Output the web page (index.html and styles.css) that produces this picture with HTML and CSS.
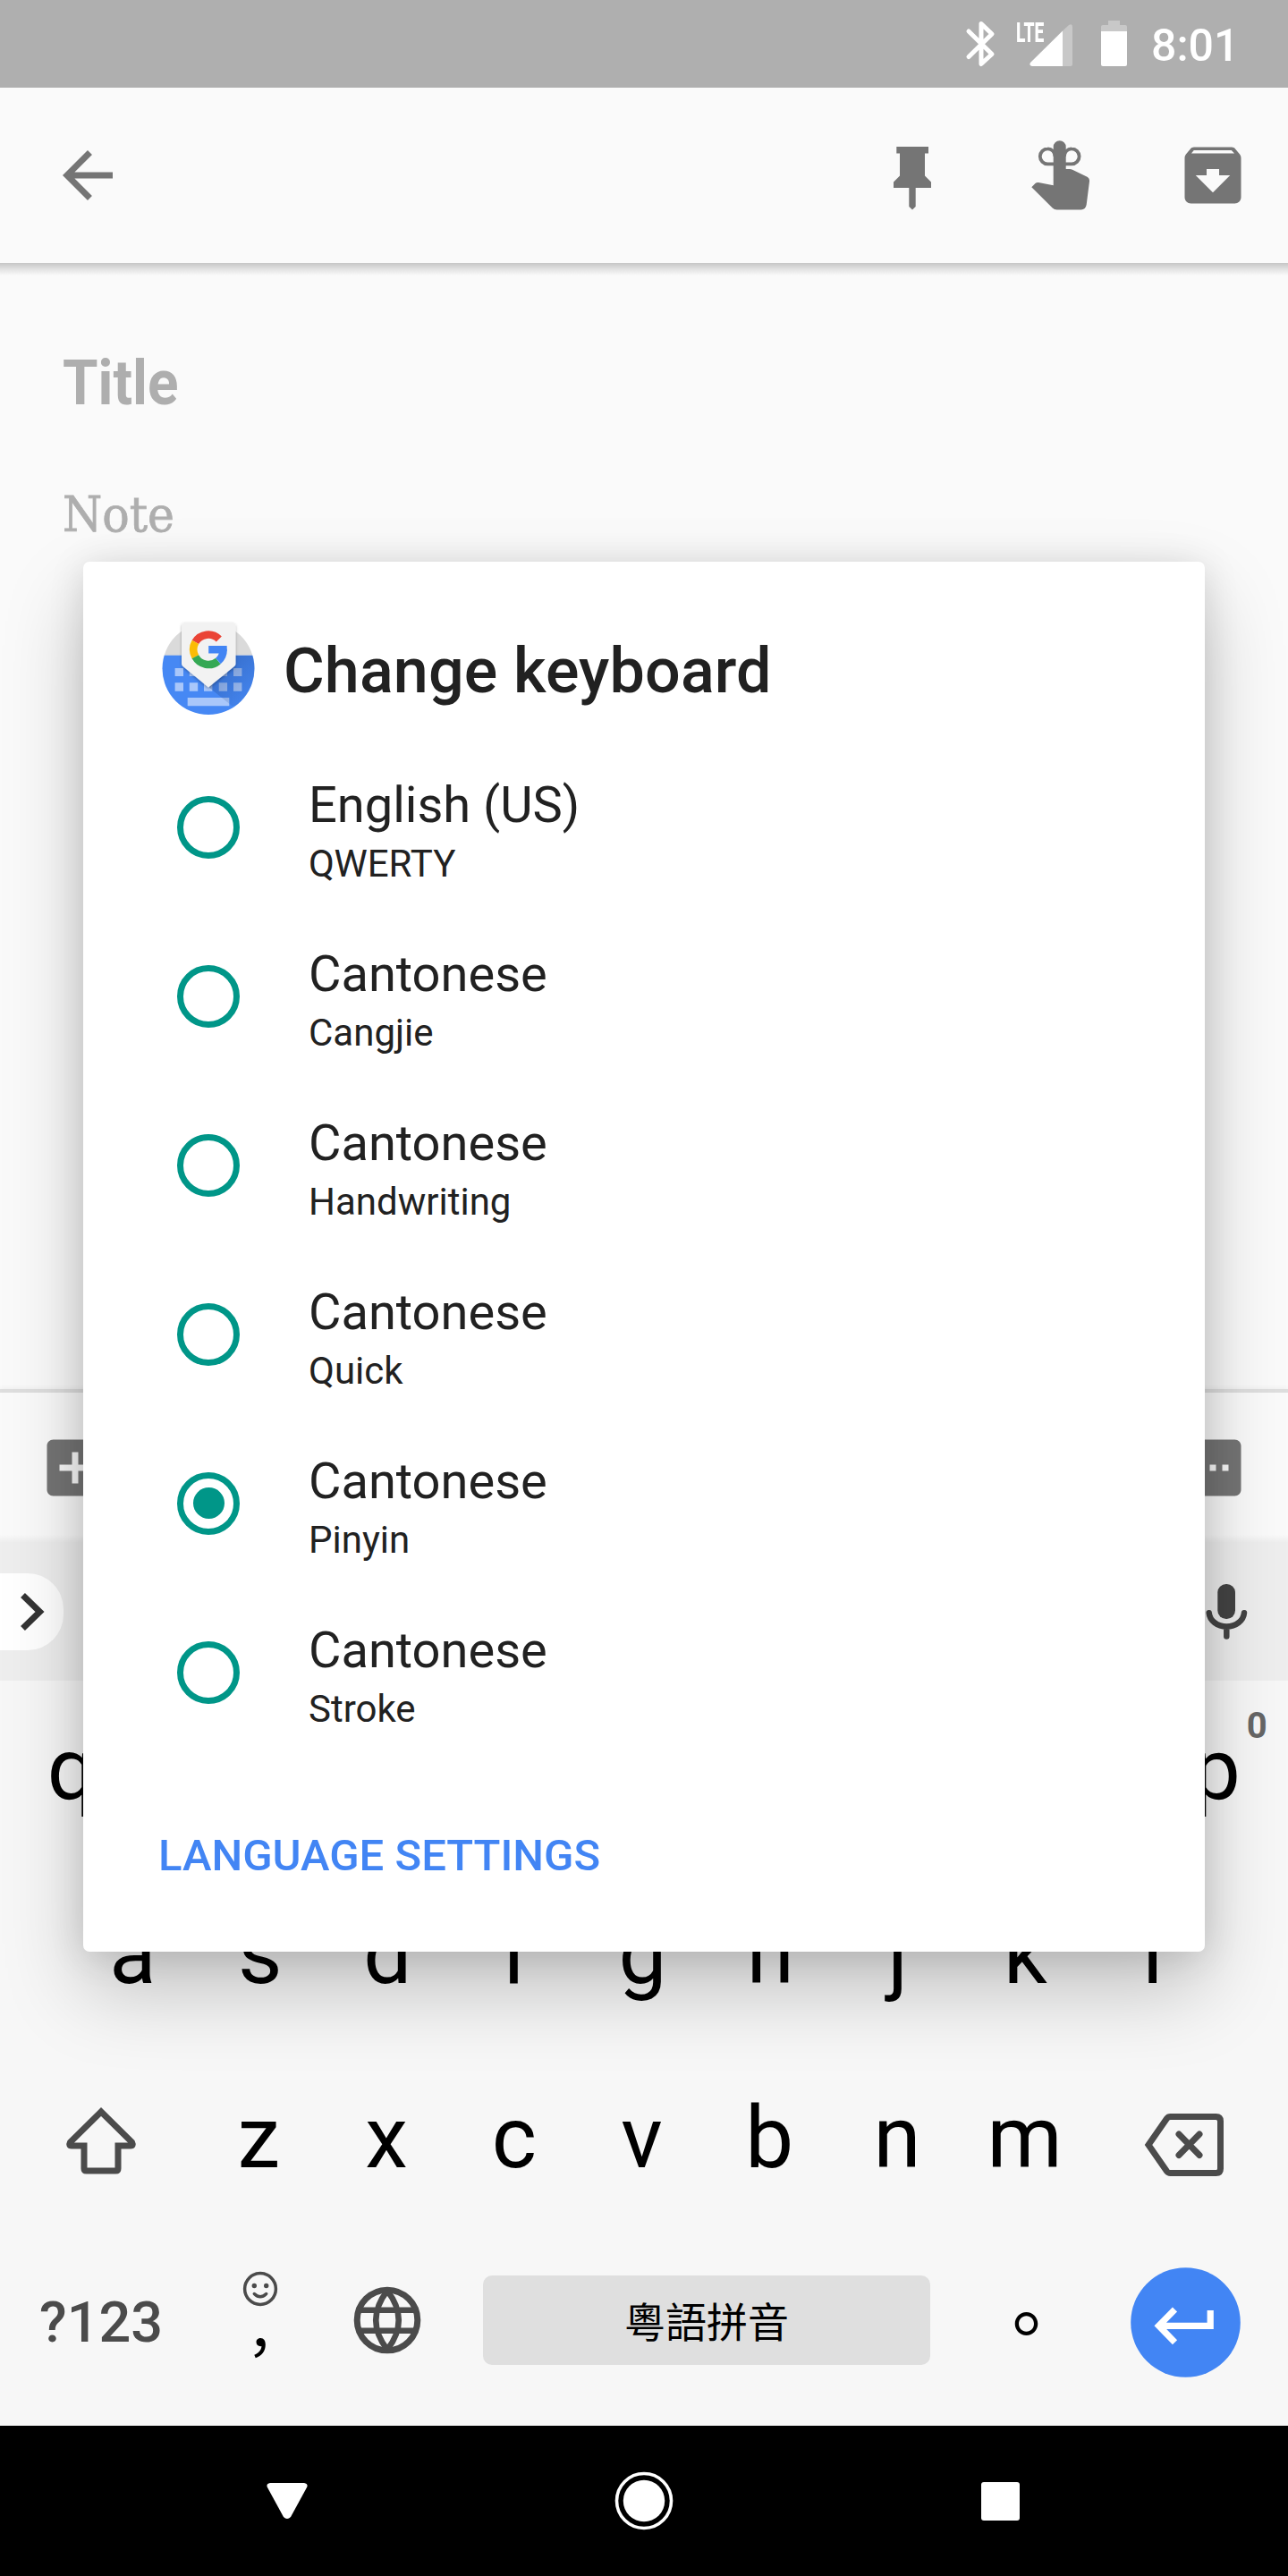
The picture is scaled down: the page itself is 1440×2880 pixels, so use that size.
FILE: index.html
```
<!DOCTYPE html>
<html lang="en">
<head>
<meta charset="utf-8">
<title>Change keyboard</title>
<link rel="stylesheet" href="styles.css">
</head>
<body>
<div class="screen">
  <header class="status-bar">
    <svg class="status-bluetooth" width="36" height="54" viewBox="1078 22 36 54"><path d="M1083 35l26 25.500-12 11V26.500l12 11.500-26 25.500" fill="none" stroke="#fff" stroke-width="5" stroke-linecap="round" stroke-linejoin="round"/></svg>
    <div class="signal">
      <svg width="50" height="50" viewBox="1150 26 50 50"><path d="M1188 34.500l7-6.500q4-2 4 2v42q0 2-2 2h-9z" fill="#c8c8c8"/><path d="M1188 34.500V74h-34q-4-1-2-4z" fill="#fff"/></svg>
      <span class="lte">LTE</span>
    </div>
    <svg class="status-battery" width="29" height="52" viewBox="1231 23 29 52"><path d="M1239 23h13v5h6q2 0 2 2v6h-29v-6q0-2 2-2h6z" fill="#c8c8c8"/><path d="M1231 35h29v37q0 2-2 2h-25q-2 0-2-2z" fill="#fff"/></svg>
    <span class="clock">8:01</span>
  </header>

  <nav class="toolbar">
    <svg class="back" width="84" height="84" viewBox="0 0 24 24"><path d="M20 11H7.830l5.590-5.590L12 4l-8 8 8 8 1.410-1.410L7.830 13H20z" fill="#757575"/></svg>
    <svg width="84" height="84" viewBox="978 154 84 84"><path d="M1002.300 164H1038v7.500h-4v25l7 7V210h-17.300v21l-3.700 3.500-3.700-3.500v-21H999v-6.500l7-7v-25h-3.700z" fill="#757575"/></svg>
    <svg width="84" height="84" viewBox="1146 154 84 84"><g fill="none" stroke="#757575" stroke-width="3.800"><path d="M1180 183.300h-8.700a8.500 8.500 0 0 1 0-17a8 8.700 0 0 1 8.200 8.700"/><path d="M1189.400 183.300h8.700a8.500 8.500 0 0 0 0-17a8 8.700 0 0 0-8.200 8.700"/></g><path d="M1177.700 164.300a7 7 0 0 1 14 0V189h4.300q1.500 0 3 .7l16.500 8q2.800 1.600 2.500 5l-3.300 26q-1 5.600-6 5.700h-27q-3 0-5-2l-23.400-23.200 4.200-4.200q1.500-1.300 3.500-1l16.700 3.300z" fill="#757575"/></svg>
    <svg width="84" height="84" viewBox="0 0 24 24"><path fill="#757575" d="M20.540 5.230l-1.390-1.680C18.880 3.210 18.470 3 18 3H6c-.47 0-.88.21-1.160.55L3.460 5.230C3.170 5.570 3 6.020 3 6.500V19c0 1.100.9 2 2 2h14c1.100 0 2-.9 2-2V6.500c0-.48-.17-.93-.46-1.270zM12 17.500L6.500 12H10v-2h4v2h3.500L12 17.500zM5.120 5l.81-1h12l.94 1H5.120z"/></svg>
  </nav>

  <main class="note">
    <div class="note-title"><span>Title</span></div>
    <div class="note-body"><span>Note</span></div>
  </main>

  <footer class="note-bar">
    <svg width="84" height="84" viewBox="0 0 24 24"><path fill="#757575" d="M19 3H5c-1.110 0-2 .9-2 2v14c0 1.100.89 2 2 2h14c1.100 0 2-.9 2-2V5c0-1.100-.9-2-2-2zm-2 10h-4v4h-2v-4H7v-2h4V7h2v4h4v2z"/></svg>
    <svg width="84" height="84" viewBox="0 0 24 24"><path fill="#757575" d="M19 3H5c-1.110 0-2 .9-2 2v14c0 1.100.89 2 2 2h14c1.100 0 2-.9 2-2V5c0-1.100-.9-2-2-2zM9 13H7v-2h2zm4 0h-2v-2h2zm4 0h-2v-2h2z"/></svg>
  </footer>

  <section class="keyboard">
    <div class="strip">
      <div class="expand"><svg width="32" height="48" viewBox="20 1777.500 32 48"><path d="M25.500 1783l19 18.500-19 18.500" fill="none" stroke="#333" stroke-width="7"/></svg></div>
      <svg width="52" height="68" viewBox="1345 1767 52 68"><rect x="1361.300" y="1770" width="19.700" height="39" rx="9.500" fill="#444"/><path d="M1351.700 1802.200a19.700 16.500 0 0 0 39.300 0M1371.300 1819v9.500" fill="none" stroke="#444" stroke-width="6.500" stroke-linecap="round"/></svg>
    </div>
    <div class="row">
      <span class="key">q</span><span class="key">w</span><span class="key">e</span><span class="key">r</span><span class="key">t</span><span class="key">y</span><span class="key">u</span><span class="key">i</span><span class="key">o</span><span class="key">p<small class="hint">0</small></span>
    </div>
    <div class="row row-home">
      <span class="key">a</span><span class="key">s</span><span class="key">d</span><span class="key">f</span><span class="key">g</span><span class="key">h</span><span class="key">j</span><span class="key">k</span><span class="key">l</span>
    </div>
    <div class="row row-shift">
      <svg width="209" height="206" viewBox="9 2291 209 206"><path d="M113 2361L78.500 2395q-2 4 1.500 4h14v25.500q0 2.500 2.500 2.500h33q2.500 0 2.500-2.500V2399h14q3.500 0 1.500-4z" fill="none" stroke="#4b4b4b" stroke-width="7"/></svg>
      <span class="key">z</span><span class="key">x</span><span class="key">c</span><span class="key">v</span><span class="key">b</span><span class="key">n</span><span class="key">m</span>
      <svg width="214" height="206" viewBox="1217 2291 214 206"><g fill="none" stroke="#4b4b4b" stroke-width="7"><path d="M1284 2398l20.500-29.500q1.500-2 4-2h51q5 0 5 5v53q0 5-5 5h-51q-2.500 0-4-2z"/><path d="M1318 2386l23 23.500m0-23.500l-23 23.500" stroke-linecap="round"/></g></svg>
    </div>
    <div class="row row-bottom">
      <span class="symbols">?123</span>
      <div class="comma-key">
        <svg width="42" height="42" viewBox="270 2538 42 42"><circle cx="291" cy="2559" r="17.400" fill="none" stroke="#4b4b4b" stroke-width="3.500"/><circle cx="284.300" cy="2555.500" r="2.700" fill="#4b4b4b"/><circle cx="297.700" cy="2555.500" r="2.700" fill="#4b4b4b"/><path d="M284.300 2564.500q6.700 6.500 13.400 0" fill="none" stroke="#4b4b4b" stroke-width="3.500" stroke-linecap="round"/></svg>
        <span class="comma" lang="zh-Hant">，</span>
      </div>
      <svg width="142" height="206" viewBox="362 2497 142 206"><g fill="none" stroke="#4b4b4b"><circle cx="433" cy="2594" r="33.800" stroke-width="7"/><path d="M433 2561q-25.500 33 0 66M433 2561q25.500 33 0 66M401 2582.700h64M401 2605.700h64" stroke-width="6.500"/></g></svg>
      <span class="space" lang="zh-Hant">粵語拼音</span>
      <span class="period" lang="zh-Hant">。</span>
      <svg width="142" height="206" viewBox="1254.500 2497 142 206"><circle cx="1325" cy="2596.500" r="61.300" fill="#4285f4"/><path d="M1352.700 2583v17.300H1295.500M1313 2582l-18 18.300 18 18.500" fill="none" stroke="#fff" stroke-width="7.200"/></svg>
    </div>
  </section>

  <nav class="system-nav">
    <svg width="50" height="46" viewBox="296 2773 50 46"><path d="M302 2776h38q5 1 3 5l-18 33q-4 4-8 0l-18-33q-2-4 3-5z" fill="#fff"/></svg>
    <svg class="home" width="66" height="66" viewBox="-33 -33 66 66"><circle r="30.500" fill="none" stroke="#fff" stroke-width="3.600"/><circle r="23.200" fill="#fff"/></svg>
    <span class="recents"></span>
  </nav>

  <div class="dialog">
    <div class="dialog-head">
      <svg width="108" height="108" viewBox="179 694 108 108">
        <defs>
          <clipPath id="disc"><circle cx="233" cy="747.500" r="51.500"/></clipPath>
          <linearGradient id="fold" x1="0" y1="0" x2="1" y2="1"><stop offset="0" stop-color="#1a3f80" stop-opacity=".45"/><stop offset="1" stop-color="#1a3f80" stop-opacity="0"/></linearGradient>
          <filter id="tag-shadow" x="-20%" y="-20%" width="140%" height="140%"><feDropShadow dx="0" dy="1.500" stdDeviation="1.500" flood-opacity=".3"/></filter>
        </defs>
        <g clip-path="url(#disc)">
          <rect x="181" y="695" width="104" height="38" fill="#dadada"/>
          <rect x="181" y="732.700" width="104" height="67" fill="#4688f4"/>
          <g fill="#a9c7fa"><path d="M195.600 747h9.400v9h-9.400zM211.800 747h9.400v9h-9.400zM244.700 747h9.400v9h-9.400zM261 747h9.400v9H261zM195.600 763.300h9.400v9.400h-9.400zM211.800 763.300h9.400v9.400h-9.400zM228 763.300h9.400v9.400H228zM244.700 763.300h9.400v9.400h-9.400zM261 763.300h9.400v9.400H261zM209.700 780h46.600v9.300h-46.600z"/></g>
          <path d="M263.500 733H285v56l-26 0-26-21 30.500-24z" fill="url(#fold)"/>
        </g>
        <path d="M207 696h52.500q4 0 4 4v42q0 2-1.500 3l-29 23.500-28.500-23.500q-1.500-1-1.500-3v-42q0-4 4-4z" fill="#f2f2f2" filter="url(#tag-shadow)"/>
        <g fill="none" stroke-width="8.600">
          <path d="M244.800 714.500A16.800 16.800 0 0 0 218.400 717.900" stroke="#ea4335"/>
          <path d="M218.400 717.900A16.800 16.800 0 0 0 218.400 734.300" stroke="#fbbc05"/>
          <path d="M218.400 734.300A16.800 16.800 0 0 0 243.900 739.100" stroke="#34a853"/>
          <path d="M243.900 739.100A16.800 16.800 0 0 0 249.600 726.500" stroke="#4285f4"/>
        </g>
        <path d="M233.200 722h20.400l.3 5-3 3.600h-17.700z" fill="#4285f4"/>
      </svg>
      <h1>Change keyboard</h1>
    </div>
    <ul class="choices">
      <li><i class="radio"></i><p>English (US)<small>QWERTY</small></p></li>
      <li><i class="radio"></i><p>Cantonese<small>Cangjie</small></p></li>
      <li><i class="radio"></i><p>Cantonese<small>Handwriting</small></p></li>
      <li><i class="radio"></i><p>Cantonese<small>Quick</small></p></li>
      <li><i class="radio checked"></i><p>Cantonese<small>Pinyin</small></p></li>
      <li><i class="radio"></i><p>Cantonese<small>Stroke</small></p></li>
    </ul>
    <div class="settings">LANGUAGE SETTINGS</div>
  </div>
</div>
</body>
</html>
```
FILE: styles.css
```
* { box-sizing: border-box; }
body { margin: 0; background: #fafafa; font-family: Roboto, "Noto Sans CJK TC", sans-serif; }
svg { display: block; flex: none; }
.screen { position: relative; display: flex; flex-direction: column; width: 1440px; height: 2880px; overflow: hidden; }

.status-bar { display: flex; height: 98px; background: #afafaf; padding: 0 60px 0 1078px; color: #fff; }
.status-bluetooth { margin-top: 22px; }
.signal { position: relative; margin: 26px 0 0 36px; }
.lte { position: absolute; left: -14px; top: -5px; font-size: 31px; line-height: 31px; font-weight: 800; transform: scaleX(.62); transform-origin: left; }
.status-battery { margin: 23px 0 0 31px; }
.clock { margin-left: 27px; font-size: 50px; line-height: 102px; font-weight: 500; }

.toolbar { position: relative; display: flex; align-items: center; gap: 84px; height: 196px; padding: 0 42px 0 56px; background: #fafafa; }
.toolbar::after { content: ""; position: absolute; left: 0; right: 0; top: 196px; height: 14px; background: linear-gradient(#c6c6c6, #e2e2e2 50%, #fafafa); }
.back { margin-right: auto; }

.note { flex: 1; padding: 94px 70px; color: #aeaeae; }
.note-title { font-size: 70px; line-height: 80px; font-weight: 700; }
.note-title span { display: inline-block; transform: scaleX(.912); transform-origin: left; }
.note-body { margin-top: 67px; font: 55px/80px "Roboto Slab", "DejaVu Serif", serif; -webkit-text-stroke: .8px #aeaeae; }
.note-body span { display: inline-block; transform: scaleX(.92); transform-origin: left; }

.note-bar { display: flex; justify-content: space-between; align-items: center; height: 171px; padding: 0 42px; border-top: 4px solid #dedede; box-shadow: 0 -1px 6px rgba(0,0,0,.05); background: linear-gradient(#fafafa 95%, #efefef); }

.keyboard { height: 988px; background: #f7f7f7; }
.strip { display: flex; justify-content: space-between; align-items: center; height: 155px; padding-right: 43px; background: #eee; }
.expand { display: flex; align-items: center; width: 71px; height: 86px; padding-left: 20px; border-radius: 0 40px 40px 0; background: #fff; }
.row { display: flex; height: 206px; padding: 0 9px; color: #000; }
.row-home { padding: 0 80px 0 77px; }
.key { position: relative; flex: 1; font-size: 96px; line-height: 199px; text-align: center; }
.hint { position: absolute; left: 105px; top: 27px; font-size: 40px; line-height: 47px; font-weight: 700; color: #666; }
.symbols { width: 213px; padding-left: 35px; font-size: 63px; line-height: 199px; font-weight: 500; color: #4b4b4b; }
.comma-key { display: flex; flex-direction: column; align-items: center; width: 140px; padding: 41px 2px 0 0; }
.comma { margin-top: -2px; font: 64px/84px "Noto Sans CJK TC", sans-serif; }
.space { width: 500px; height: 100px; margin: 47px 0 0 36px; border-radius: 10px; background: #dfdfdf; font: 46px/98px "Noto Sans CJK TC", sans-serif; text-align: center; }
.period { width: 214.500px; font: 84px/194px "Noto Sans CJK TC", sans-serif; text-align: center; }

.system-nav { display: flex; align-items: center; height: 168px; padding: 0 300px 0 296px; background: #000; justify-content: space-between; }
.home { margin-right: 4px; }
.recents { width: 43px; height: 43px; border-radius: 3px; background: #fff; }

.dialog { position: absolute; left: 93px; top: 628px; width: 1254px; height: 1554px; padding-top: 66px; border-radius: 7px; background: #fff; color: #212121; box-shadow: 0 42px 90px rgba(0,0,0,.22), 0 4px 40px rgba(0,0,0,.12); }
.dialog-head { display: flex; gap: 30px; padding-left: 86px; }
h1 { margin: 0; font-size: 70px; line-height: 112px; font-weight: 500; letter-spacing: .15px; }
.choices { margin: 24px 0 0; padding: 0; list-style: none; }
.choices li { display: flex; align-items: center; gap: 77px; height: 189px; padding-left: 105px; }
.radio { position: relative; width: 70px; height: 70px; border: 7px solid #009688; border-radius: 50%; }
.checked::after { content: ""; position: absolute; inset: 10.500px; border-radius: 50%; background: #009688; }
.choices p { margin: 0; padding-top: 16px; font-size: 56px; line-height: 66px; }
.choices small { display: block; font-size: 42px; }
.settings { margin: 81px 0 0 84px; font-size: 49px; line-height: 60px; font-weight: 500; color: #4285f4; }
```
